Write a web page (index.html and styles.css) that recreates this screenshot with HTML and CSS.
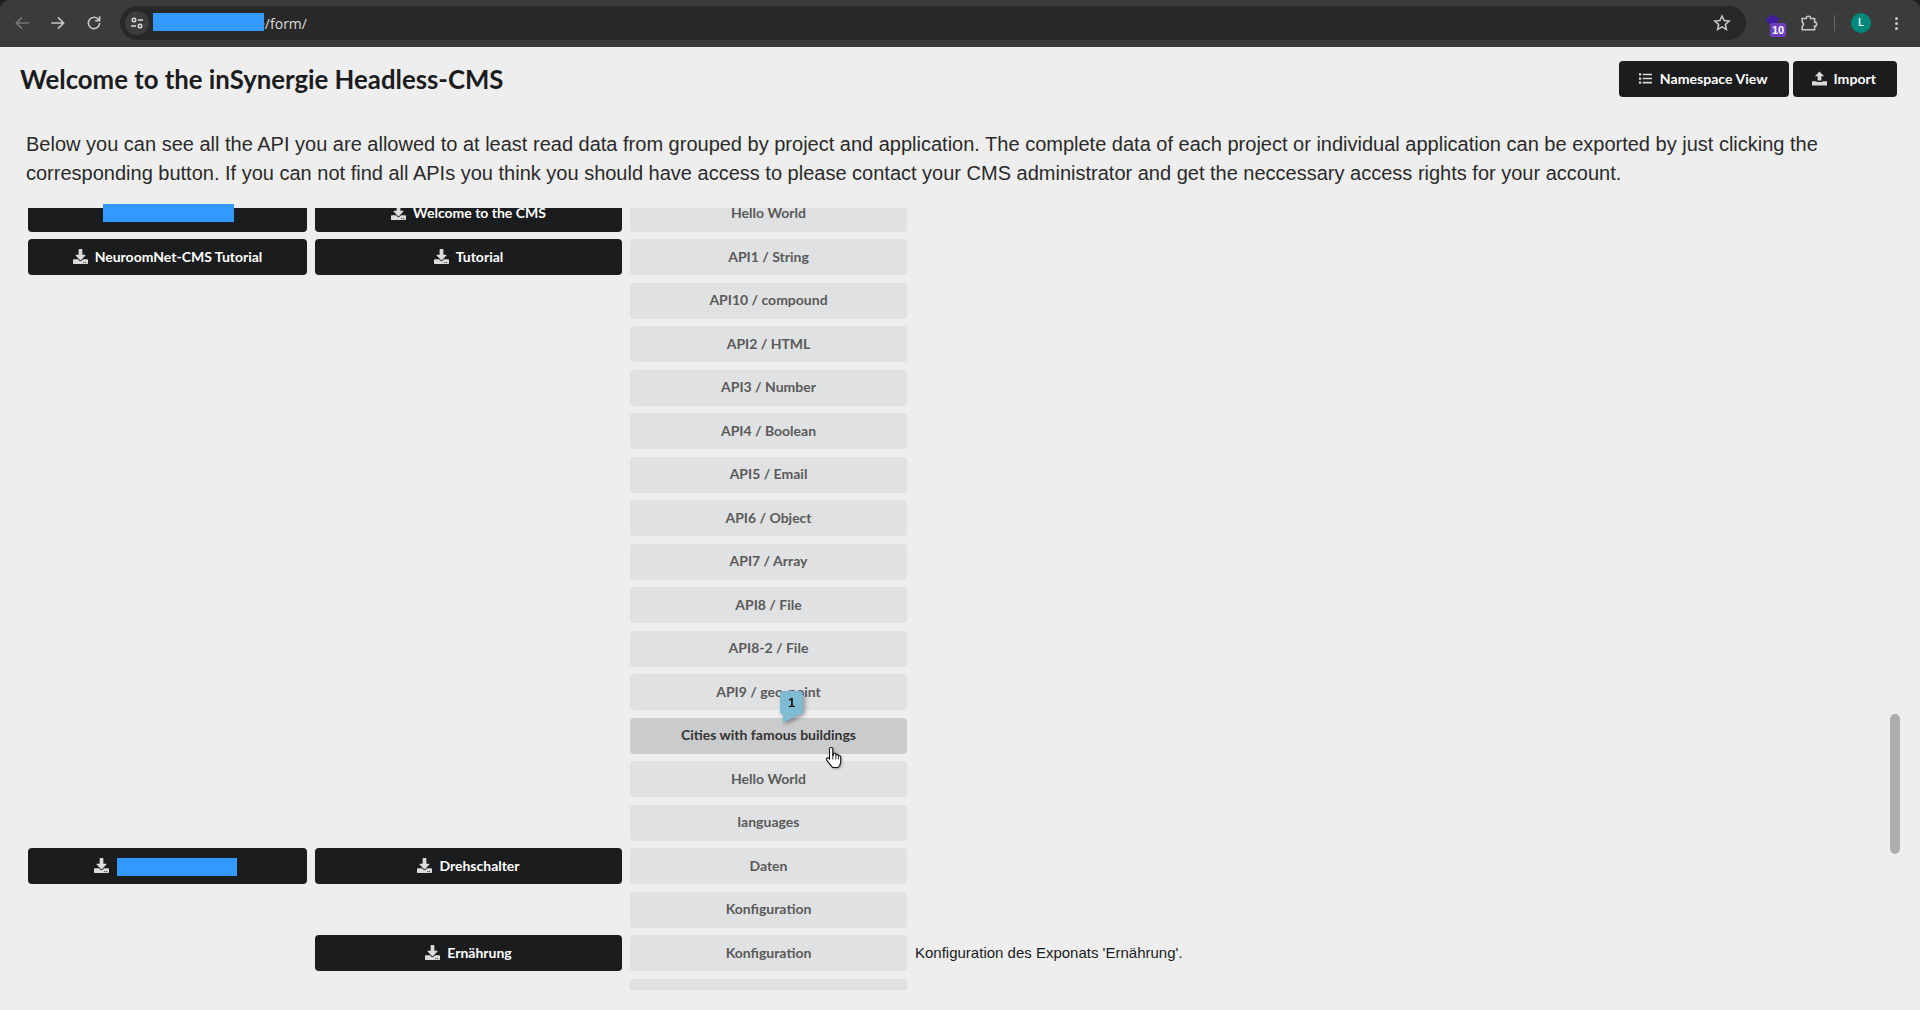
FILE: index.html
```html
<!DOCTYPE html>
<html lang="en">
<head>
<meta charset="utf-8">
<title>inSynergie Headless-CMS</title>
<link rel="stylesheet" href="styles.css">
</head>
<body>
<svg class="defs" width="0" height="0" aria-hidden="true">
  <symbol id="dl" viewBox="0 0 512 512">
    <path d="M216 0h80c13 0 24 11 24 24v168h88c18 0 27 21 14 34L270 380c-8 8-20 8-28 0L90 226c-13-13-4-34 14-34h88V24c0-13 11-24 24-24z"/>
    <path d="M512 376v112c0 13-11 24-24 24H24c-13 0-24-11-24-24V376c0-13 11-24 24-24h147l49 49c20 20 52 20 72 0l49-49h147c13 0 24 11 24 24zm-124 88c0-11-9-20-20-20s-20 9-20 20 9 20 20 20 20-9 20-20zm64 0c0-11-9-20-20-20s-20 9-20 20 9 20 20 20 20-9 20-20z"/>
  </symbol>
</svg>

<div class="shell">
<header class="chrome">
  <div class="nav">
    <svg class="ico dim" viewBox="0 0 16 16"><path d="M14 8H3M8 3 3 8l5 5"/></svg>
    <svg class="ico" viewBox="0 0 16 16"><path d="M2 8h11M8 3l5 5-5 5"/></svg>
    <svg class="ico" viewBox="0 0 16 16"><path d="M13 8a5 5 0 1 1-1.600-3.700L13 6M13 2v4H9"/></svg>
  </div>
  <div class="omnibox">
    <span class="site-info">
      <svg viewBox="0 0 16 16"><circle cx="5" cy="5" r="1.800"/><path d="M9 5h5M2 11h5"/><circle cx="11" cy="11" r="1.800"/></svg>
    </span>
    <span class="url">e/form/</span>
    <span class="redact redact-url"></span>
    <svg class="star" viewBox="0 0 16 16"><path d="m8 1.800 1.900 4 4.400.5-3.300 3 .9 4.400L8 11.500l-3.900 2.200.9-4.400-3.300-3 4.400-.5z"/></svg>
  </div>
  <div class="tools">
    <span class="ext">
      <svg viewBox="0 0 18 14"><path d="M9 0 17 5 9 13 1 6z"/></svg>
      <b class="ext-badge">10</b>
    </span>
    <svg class="puzzle" viewBox="0 0 16 16"><path d="M2 4h3.500a2 2 0 0 1 4 0H13v3.200a1.800 1.800 0 0 1 0 3.600V14H2v-3a2 2 0 0 0 0-3.600z"/></svg>
    <span class="sep"></span>
    <span class="avatar">L</span>
    <span class="menu"><i></i><i></i><i></i></span>
  </div>
</header>
</div>

<main class="page">
  <div class="title-row">
    <h1>Welcome to the inSynergie Headless-CMS</h1>
    <div class="actions">
      <a class="btn head-btn">
        <svg class="btn-ico" viewBox="0 0 16 16"><path d="M1 2.500h2.400v2.400H1zM5 2.800h10v1.800H5zM1 6.800h2.400v2.400H1zM5 7.100h10v1.800H5zM1 11.100h2.400v2.400H1zM5 11.400h10v1.800H5z"/></svg>Namespace View
      </a>
      <a class="btn head-btn">
        <svg class="btn-ico" viewBox="0 0 16 16"><path d="M8 .5 13 5.600H10v4.600H6V5.600H3zM0 11h4.800v.8h6.400V11H16v4.500H0z"/></svg>Import
      </a>
    </div>
  </div>
  <p class="intro">Below you can see all the API you are allowed to at least read data from grouped by project and application. The complete data of each project or individual application can be exported by just clicking the corresponding button. If you can not find all APIs you think you should have access to please contact your CMS administrator and get the neccessary access rights for your account.</p>

  <div class="list-wrap">
    <div class="viewport">
      <div class="grid">
        <a class="btn"></a><a class="btn"><svg class="dl"><use href="#dl"/></svg>Welcome to the CMS</a><a class="api">Hello World</a><span></span>
        <a class="btn"><svg class="dl"><use href="#dl"/></svg>NeuroomNet-CMS Tutorial</a><a class="btn"><svg class="dl"><use href="#dl"/></svg>Tutorial</a><a class="api">API1 / String</a><span></span>
        <span></span><span></span><a class="api">API10 / compound</a><span></span>
        <span></span><span></span><a class="api">API2 / HTML</a><span></span>
        <span></span><span></span><a class="api">API3 / Number</a><span></span>
        <span></span><span></span><a class="api">API4 / Boolean</a><span></span>
        <span></span><span></span><a class="api">API5 / Email</a><span></span>
        <span></span><span></span><a class="api">API6 / Object</a><span></span>
        <span></span><span></span><a class="api">API7 / Array</a><span></span>
        <span></span><span></span><a class="api">API8 / File</a><span></span>
        <span></span><span></span><a class="api">API8-2 / File</a><span></span>
        <span></span><span></span><a class="api">API9 / geo-point</a><span></span>
        <span></span><span></span><a class="api hover">Cities with famous buildings</a><span></span>
        <span></span><span></span><a class="api">Hello World</a><span></span>
        <span></span><span></span><a class="api">languages</a><span></span>
        <a class="btn"><svg class="dl"><use href="#dl"/></svg><span class="hidden-label"></span></a><a class="btn"><svg class="dl"><use href="#dl"/></svg>Drehschalter</a><a class="api">Daten</a><span></span>
        <span></span><span></span><a class="api">Konfiguration</a><span></span>
        <span></span><a class="btn"><svg class="dl"><use href="#dl"/></svg>Ernährung</a><a class="api">Konfiguration</a><span class="desc">Konfiguration des Exponats 'Ernährung'.</span>
        <span></span><span></span><a class="api"></a><span></span>
      </div>
    </div>
    <span class="redact redact-a"></span>
    <span class="redact redact-b"></span>
    <span class="marker">1</span>
    <svg class="cursor" viewBox="0 0 18 24"><path d="M6 1.500c1 0 1.700.7 1.700 1.700V10l.7-.2V8.500c0-1.700 2.500-1.700 2.600 0v1.300c.3-1.500 2.600-1.400 2.600.2v1c.4-1.300 2.400-1 2.400.6v4.400c0 3-1.700 5.500-3 6.500H7.500c-1-1.500-2-2.500-3.500-4.300L1.500 14.700c-1-1.500.8-3 2.200-1.800L4.300 13.500V3.200C4.300 2.200 5 1.500 6 1.500z"/><path class="cursor-lines" d="M7.700 10v4M10.900 9.500v4.500M13.500 10.500v3.500"/></svg>
  </div>
  <span class="scroll-thumb"></span>
</main>
</body>
</html>
```
FILE: styles.css
```css
* { box-sizing: border-box; }
html, body { margin: 0; height: 1010px; overflow: hidden; }
body { background: #eee; font-family: "Lato", "Liberation Sans", sans-serif; color: #1b1c1d; display: flex; flex-direction: column; }
.defs { position: absolute; }

.shell { background: #202020; flex: none; }
.chrome { height: 47px; background: #3b3b3b; border-radius: 9px 9px 0 0; display: flex; align-items: center; padding: 0 8px 1px 13px; }
.nav { display: flex; gap: 18px; width: 107px; flex: none; }
.ico { width: 18px; height: 18px; fill: none; stroke: #c7c7c7; stroke-width: 1.4; }
.ico.dim { stroke: #777; }
.omnibox { width: 1626px; height: 34px; border-radius: 17px; background: #282828; display: flex; align-items: center; position: relative; flex: none; padding-left: 5px; }
.site-info { width: 24px; height: 24px; border-radius: 50%; background: #3c3c3c; display: flex; align-items: center; justify-content: center; flex: none; }
.site-info svg { width: 16px; height: 16px; fill: none; stroke: #ddd; stroke-width: 1.4; }
.url { margin-left: 108px; font: 14px "Open Sans", sans-serif; color: #dcdcdc; }
.star { width: 18px; height: 18px; fill: none; stroke: #c7c7c7; stroke-width: 1.4; position: absolute; right: 15px; top: 8px; }
.redact { background: #3399ff; position: absolute; }
.redact-url { left: 33px; top: 7px; width: 111px; height: 18px; }
.tools { display: flex; align-items: center; flex: 1; padding-left: 18px; }
.ext { position: relative; width: 24px; height: 24px; }
.ext svg { width: 17px; height: 14px; fill: #3f1d9a; position: absolute; left: 0; top: 3px; }
.ext-badge { position: absolute; left: 6px; top: 12px; width: 16px; height: 14px; border-radius: 2px; background: #6b3fc0; color: #fff; font: 700 11px/14px "Liberation Sans", sans-serif; text-align: center; }
.puzzle { width: 18px; height: 18px; fill: none; stroke: #c7c7c7; stroke-width: 1.4; margin-left: 12px; }
.sep { width: 1px; height: 16px; background: #666; margin-left: 16px; }
.avatar { width: 20px; height: 20px; margin-left: 16px; border-radius: 50%; background: #00897b; color: #e8f5f3; font: 500 11px/20px "Roboto", sans-serif; text-align: center; }
.menu { display: flex; flex-direction: column; gap: 2px; margin-left: 24px; }
.menu i { width: 3px; height: 3px; border-radius: 50%; background: #c7c7c7; display: block; }

.page { flex: 1; min-height: 0; display: flex; flex-direction: column; position: relative; }
.title-row { display: flex; justify-content: space-between; align-items: flex-start; padding: 14px 23px 0 20px; }
h1 { margin: 0; font-size: 25.75px; line-height: 36px; font-weight: 700; }
.actions { display: flex; gap: 4px; }
.btn { height: 36px; padding-bottom: 2px; background: #1b1c1d; color: #fff; border-radius: 4px; display: flex; align-items: center; justify-content: center; font: 700 14px "Lato", sans-serif; }
.head-btn { padding: 0 21px 1px 19px; font-size: 14.1px; }
.btn-ico { width: 15px; height: 15px; fill: #d8d8d8; margin-right: 7px; }
.intro { margin: 33px 40px 0 26px; font: 20px/29px "Liberation Sans", sans-serif; color: #2a2a2a; }

.list-wrap { position: relative; margin-top: 20px; padding-left: 28px; width: 1300px; }
.viewport { height: 782px; overflow: hidden; }
.grid { margin-top: -12.5px; display: grid; grid-template-columns: 279px 307px 277px 1fr; grid-auto-rows: 36px; gap: 7.5px 8px; }
.dl { width: 15px; height: 15px; fill: #dcdcdc; margin-right: 7px; flex: none; }
.hidden-label { width: 125px; }
.api { background: #e0e1e2; color: #5a5a5a; border-radius: 4px; padding-bottom: 2px; display: flex; align-items: center; justify-content: center; font: 700 14px "Lato", sans-serif; }
.api.hover { background: #cacbcd; color: #333; }
.desc { font: 15px "Liberation Sans", sans-serif; color: #1b1c1d; align-self: center; margin-top: -2px; }
.redact-a { left: 103px; top: -4px; width: 131px; height: 18px; }
.redact-b { left: 117px; top: 650px; width: 120px; height: 18px; }
.marker { position: absolute; left: 780px; top: 483px; width: 23px; height: 24px; background: #7fbcd4; border-radius: 4px 4px 5px 4px; color: #111; font: 700 13px/24px "Liberation Sans", sans-serif; text-align: center; filter: drop-shadow(2px 2px 2px rgba(0,0,0,.35)); }
.marker::after { content: ""; position: absolute; left: 0; top: 23px; width: 20px; height: 9px; background: #7fbcd4; clip-path: polygon(3px 0, 20px 0, 3px 9px); }
.cursor { position: absolute; left: 825px; top: 538px; width: 18px; height: 23px; fill: #fff; stroke: #111; stroke-width: 1.1; filter: drop-shadow(1px 1px 1px rgba(0,0,0,.3)); }
.cursor-lines { fill: none; stroke-width: .9; }
.scroll-thumb { position: absolute; left: 1890px; top: 667px; width: 10px; height: 140px; border-radius: 5px; background: #adadad; }
```
